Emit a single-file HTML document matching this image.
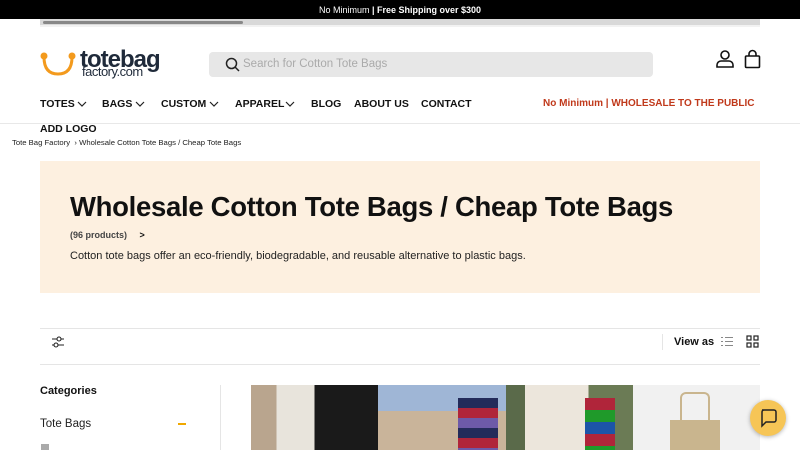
<!DOCTYPE html>
<html><head><meta charset="utf-8">
<style>
*{margin:0;padding:0;box-sizing:border-box}
body{width:800px;height:450px;overflow:hidden;background:#fff;font-family:"Liberation Sans",sans-serif;color:#111;position:relative}
.top{height:19px;background:#000;color:#fff;font-size:9px;text-align:center;line-height:20px}
.bar{position:absolute;left:40px;top:19px;width:720px;height:8px;background:#d9d9d9;border-bottom:2px solid #f2f2f2}
.bar i{position:absolute;left:3px;top:2px;width:200px;height:3px;background:#888;border-radius:2px}
.abs{position:absolute}
.search{left:209px;top:52px;width:444px;height:25px;background:#e7e7e7;border-radius:4px;font-size:11.5px;color:#aaa;line-height:25px;padding-left:34px}
.nav{top:98px;font-size:10.5px;font-weight:bold;color:#111}
.hr{left:0;width:800px;height:1px;background:#e8e8e8}
.hero{left:40px;top:161px;width:720px;height:132px;background:#fdf0e0}
h1{position:absolute;left:70px;top:191px;font-size:27.5px;font-weight:bold;letter-spacing:-0.3px}
.img{top:385px;height:65px}
.chev{position:absolute;top:101px}
</style></head><body>
<div class="top">No Minimum <b>| Free Shipping over $300</b></div>
<div class="bar"><i></i></div>

<svg class="abs" style="left:40px;top:52px" width="40" height="24" viewBox="0 0 40 24"><circle cx="4" cy="4" r="3.5" fill="#f39a1d"/><circle cx="32" cy="4" r="3.5" fill="#f39a1d"/><path d="M4 5 Q4 22 18 22 Q32 22 32 5" stroke="#f39a1d" stroke-width="3" fill="none"/></svg>
<div class="abs" style="left:80px;top:46px;font-size:24px;font-weight:bold;color:#1f2a3a;letter-spacing:-1px">totebag</div>
<div class="abs" style="left:82px;top:64px;font-size:13px;color:#1f2a3a;letter-spacing:-0.5px">factory.com</div>

<div class="abs search">Search for Cotton Tote Bags</div>
<svg class="abs" style="left:225px;top:57px" width="15" height="15" viewBox="0 0 15 15"><circle cx="6.5" cy="6.5" r="5" stroke="#222" stroke-width="1.5" fill="none"/><path d="M10 10l4 4" stroke="#222" stroke-width="1.5"/></svg>
<svg class="abs" style="left:715px;top:49px" width="20" height="20" viewBox="0 0 20 20" fill="none" stroke="#111" stroke-width="1.6"><circle cx="10" cy="6" r="4"/><path d="M2 18v-2a4 4 0 0 1 4-4h8a4 4 0 0 1 4 4v2z"/></svg>
<svg class="abs" style="left:744px;top:49px" width="17" height="20" viewBox="0 0 17 20" fill="none" stroke="#111" stroke-width="1.6"><rect x="1.5" y="7" width="14" height="11.5" rx="1"/><path d="M5 7V5a3.5 3.5 0 0 1 7 0v2"/></svg>

<div class="abs nav" style="left:40px">TOTES</div>
<svg class="chev" style="left:77px" width="10" height="6" viewBox="0 0 10 6" fill="none" stroke="#222" stroke-width="1.2"><path d="M1 1l4 4 4-4"/></svg>
<div class="abs nav" style="left:102px">BAGS</div>
<svg class="chev" style="left:135px" width="10" height="6" viewBox="0 0 10 6" fill="none" stroke="#222" stroke-width="1.2"><path d="M1 1l4 4 4-4"/></svg>
<div class="abs nav" style="left:161px">CUSTOM</div>
<svg class="chev" style="left:209px" width="10" height="6" viewBox="0 0 10 6" fill="none" stroke="#222" stroke-width="1.2"><path d="M1 1l4 4 4-4"/></svg>
<div class="abs nav" style="left:235px">APPAREL</div>
<svg class="chev" style="left:285px" width="10" height="6" viewBox="0 0 10 6" fill="none" stroke="#222" stroke-width="1.2"><path d="M1 1l4 4 4-4"/></svg>
<div class="abs nav" style="left:311px">BLOG</div>
<div class="abs nav" style="left:354px">ABOUT US</div>
<div class="abs nav" style="left:421px">CONTACT</div>
<div class="abs nav" style="left:543px;color:#c0391b;font-size:10px">No Minimum | WHOLESALE TO THE PUBLIC</div>
<div class="abs hr" style="top:123px"></div>
<div class="abs nav" style="left:40px;top:123px">ADD LOGO</div>
<div class="abs" style="left:12px;top:138px;font-size:7.7px;color:#222">Tote Bag Factory &nbsp;›&nbsp;Wholesale Cotton Tote Bags / Cheap Tote Bags</div>

<div class="abs hero"></div>
<h1>Wholesale Cotton Tote Bags / Cheap Tote Bags</h1>
<div class="abs" style="left:70px;top:230px;font-size:9px;font-weight:bold;color:#444">(96 products) &nbsp;&nbsp;&nbsp; <span style="color:#111">&gt;</span></div>
<div class="abs" style="left:70px;top:250px;font-size:11px;color:#222">Cotton tote bags offer an eco-friendly, biodegradable, and reusable alternative to plastic bags.</div>

<div class="abs" style="left:40px;top:328px;width:720px;height:1px;background:#e5e5e5"></div>
<div class="abs" style="left:40px;top:364px;width:720px;height:1px;background:#e5e5e5"></div>
<svg class="abs" style="left:51px;top:335px" width="14" height="14" viewBox="0 0 14 14" fill="none" stroke="#222" stroke-width="1.1"><path d="M1 4h12M1 10h12"/><circle cx="8" cy="4" r="2" fill="#fff"/><circle cx="5" cy="10" r="2" fill="#fff"/></svg>
<div class="abs" style="left:662px;top:334px;width:1px;height:16px;background:#e5e5e5"></div>
<div class="abs" style="left:674px;top:336px;font-size:11px;font-weight:bold">View as</div>
<svg class="abs" style="left:721px;top:336px" width="12" height="11" viewBox="0 0 12 11" stroke="#888" stroke-width="1"><path d="M0 1.5h2M4 1.5h8M0 5.5h2M4 5.5h8M0 9.5h2M4 9.5h8"/></svg>
<svg class="abs" style="left:746px;top:335px" width="13" height="13" viewBox="0 0 13 13" fill="none" stroke="#222" stroke-width="1.2"><rect x="1" y="1" width="4" height="4"/><rect x="8" y="1" width="4" height="4"/><rect x="1" y="8" width="4" height="4"/><rect x="8" y="8" width="4" height="4"/></svg>

<div class="abs" style="left:40px;top:385px;font-size:11px;font-weight:bold">Categories</div>
<div class="abs" style="left:40px;top:418px;font-size:11.5px;color:#222">Tote Bags</div>
<div class="abs" style="left:178px;top:423px;width:8px;height:1.5px;background:#f0a800"></div>
<div class="abs" style="left:41px;top:444px;width:8px;height:6px;background:#aaa"></div>
<div class="abs" style="left:220px;top:385px;width:1px;height:65px;background:#e5e5e5"></div>

<div class="abs img" style="left:251px;width:127px;background:linear-gradient(90deg,#b9a58e 0 20%,#e8e4dc 20% 50%,#1a1a1a 50%)"></div>
<div class="abs img" style="left:378px;width:128px;background:linear-gradient(180deg,#9fb6d6 0 40%,#c9b49a 40%)"></div>
<div class="abs img" style="left:506px;width:127px;background:linear-gradient(90deg,#5a6a4a 0 15%,#ece6dc 15% 65%,#6b7b55 65%)"></div>
<div class="abs img" style="left:633px;width:127px;background:#f1f1f1"></div>
<div class="abs" style="left:458px;top:398px;width:40px;height:52px;background:repeating-linear-gradient(180deg,#232b5a 0 10px,#b0253a 10px 20px,#6d5aa8 20px 30px)"></div>
<div class="abs" style="left:585px;top:398px;width:30px;height:52px;background:repeating-linear-gradient(180deg,#b0253a 0 12px,#1f9a2a 12px 24px,#1c55a8 24px 36px)"></div>
<div class="abs" style="left:670px;top:420px;width:50px;height:30px;background:#c9b58e"></div>
<div class="abs" style="left:680px;top:392px;width:30px;height:30px;border:2px solid #c9b58e;border-bottom:none;border-radius:6px 6px 0 0"></div>

<div class="abs" style="left:750px;top:400px;width:36px;height:36px;border-radius:50%;background:#f6c556;box-shadow:0 1px 4px rgba(0,0,0,.3)"></div>
<svg class="abs" style="left:758px;top:408px" width="20" height="20" viewBox="0 0 20 20" fill="none" stroke="#222" stroke-width="1.5"><path d="M4 2h12a2 2 0 0 1 2 2v8a2 2 0 0 1-2 2H8l-4 4V4a2 2 0 0 1 2-2"/></svg>
</body></html>
